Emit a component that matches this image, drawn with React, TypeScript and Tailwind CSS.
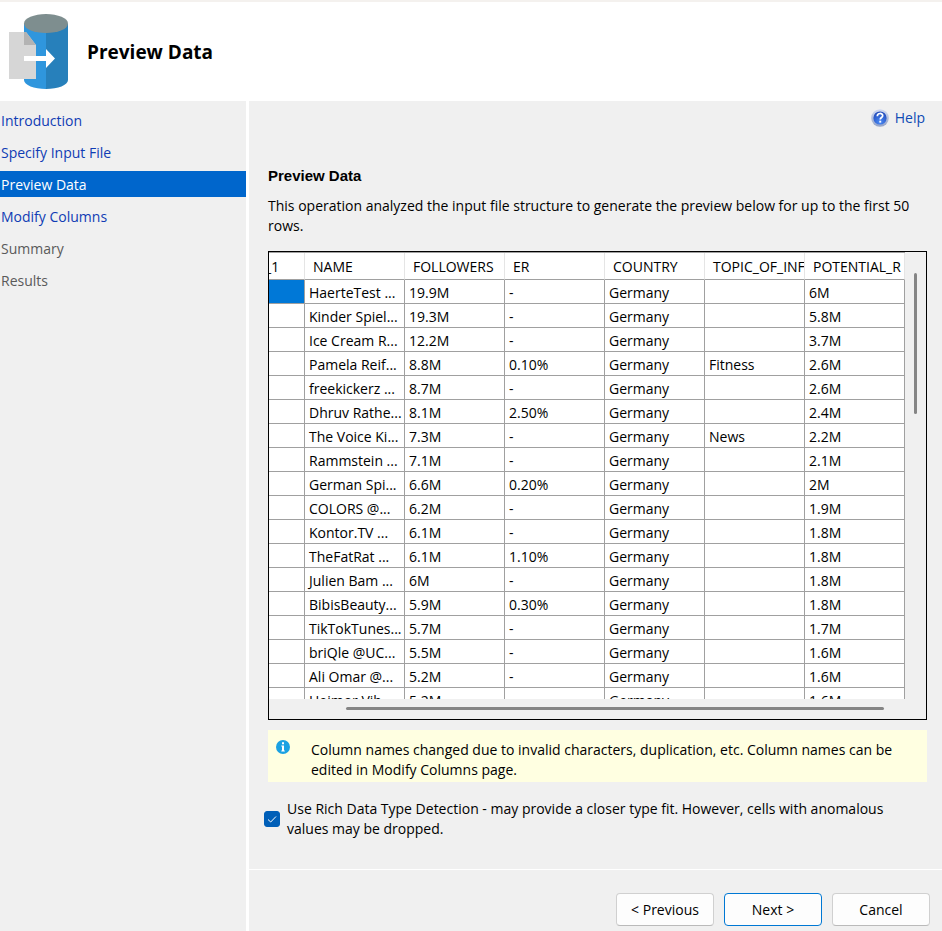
import { useState } from "react";

type Step = { label: string; state: "link" | "current" | "pending" };

const steps: Step[] = [
  { label: "Introduction", state: "link" },
  { label: "Specify Input File", state: "link" },
  { label: "Preview Data", state: "current" },
  { label: "Modify Columns", state: "link" },
  { label: "Summary", state: "pending" },
  { label: "Results", state: "pending" },
];

const columns = ["_1", "NAME", "FOLLOWERS", "ER", "COUNTRY", "TOPIC_OF_INF", "POTENTIAL_R"];

const rows = [
  ["", "HaerteTest ...", "19.9M", "-", "Germany", "", "6M"],
  ["", "Kinder Spiel...", "19.3M", "-", "Germany", "", "5.8M"],
  ["", "Ice Cream R...", "12.2M", "-", "Germany", "", "3.7M"],
  ["", "Pamela Reif...", "8.8M", "0.10%", "Germany", "Fitness", "2.6M"],
  ["", "freekickerz ...", "8.7M", "-", "Germany", "", "2.6M"],
  ["", "Dhruv Rathe...", "8.1M", "2.50%", "Germany", "", "2.4M"],
  ["", "The Voice Ki...", "7.3M", "-", "Germany", "News", "2.2M"],
  ["", "Rammstein ...", "7.1M", "-", "Germany", "", "2.1M"],
  ["", "German Spi...", "6.6M", "0.20%", "Germany", "", "2M"],
  ["", "COLORS @...", "6.2M", "-", "Germany", "", "1.9M"],
  ["", "Kontor.TV ...", "6.1M", "-", "Germany", "", "1.8M"],
  ["", "TheFatRat ...", "6.1M", "1.10%", "Germany", "", "1.8M"],
  ["", "Julien Bam ...", "6M", "-", "Germany", "", "1.8M"],
  ["", "BibisBeauty...", "5.9M", "0.30%", "Germany", "", "1.8M"],
  ["", "TikTokTunes...", "5.7M", "-", "Germany", "", "1.7M"],
  ["", "briQle @UC...", "5.5M", "-", "Germany", "", "1.6M"],
  ["", "Ali Omar @...", "5.2M", "-", "Germany", "", "1.6M"],
  ["", "Heimor Vib...", "5.2M", "-", "Germany", "", "1.6M"],
];

function DatabaseLogo() {
  return (
    <svg width="59" height="76" viewBox="0 0 59 76" aria-hidden="true">
      <path d="M15 10v56c0 5 10 9 22 9V10z" fill="#2f96dd" />
      <path d="M37 10v65c12 0 22-4 22-9V10z" fill="#2780bb" />
      <ellipse cx="37" cy="9.500" rx="22" ry="9.500" fill="#7e8e8f" />
      <path d="M0 18h17l10 13v34H0z" fill="#d6d6d6" />
      <path d="M15 18h2l10 13H15z" fill="#b3b3b3" />
      <path d="M15 42h22v-7l9 9.500-9 9.500v-7H15z" fill="#fff" />
    </svg>
  );
}

function HelpIcon() {
  return (
    <svg width="18" height="18" viewBox="0 0 18 18" aria-hidden="true">
      <defs>
        <radialGradient id="helpFill" cx="0.5" cy="0.8" r="0.8">
          <stop offset="0" stopColor="#4a8af5" />
          <stop offset="1" stopColor="#2048b8" />
        </radialGradient>
        <linearGradient id="helpRim" x1="0" y1="0" x2="0" y2="1">
          <stop offset="0" stopColor="#d0daf2" />
          <stop offset="1" stopColor="#93a3c8" />
        </linearGradient>
      </defs>
      <circle cx="9" cy="9" r="8.800" fill="url(#helpRim)" />
      <circle cx="9" cy="9" r="6.600" fill="url(#helpFill)" />
      <path d="M6.300 7.200c0-3.600 5.400-3.500 5.400-.5 0 1.800-2.500 1.900-2.500 3.900" fill="none" stroke="#fff" strokeWidth="1.700" />
      <rect x="8.300" y="11.700" width="1.900" height="1.900" fill="#fff" />
    </svg>
  );
}

function InfoIcon() {
  return (
    <svg className="shrink-0" width="14" height="14" viewBox="0 0 14 14" aria-hidden="true">
      <circle cx="7" cy="7" r="7" fill="#1ba1e2" />
      <path d="M6 2.200h2v2H6zM5.300 5.500H8v5h.8v1H5.300v-1H6v-4h-.7z" fill="#fff" />
    </svg>
  );
}

function StepItem({ step }: { step: Step }) {
  if (step.state === "pending") {
    return <li className="px-px pt-1 pb-0.5 text-[#5a5a5a]">{step.label}</li>;
  }
  if (step.state === "current") {
    return (
      <li aria-current="step" className="bg-[#0066cc] px-px pt-1 pb-0.5 text-white">
        {step.label}
      </li>
    );
  }
  return (
    <li className="px-px pt-1 pb-0.5">
      <a href="#step" className="text-[#0f3cb4]">
        {step.label}
      </a>
    </li>
  );
}

function PreviewTable() {
  return (
    <div className="border border-black">
      <div className="flex">
        <div className="h-[447px] min-w-0 flex-1 overflow-hidden border-t border-[#a0a0a0] bg-white">
          <table className="w-full table-fixed border-separate border-spacing-0">
            <thead>
              <tr>
                {columns.map((name, i) => (
                  <th
                    key={name}
                    scope="col"
                    className={
                      "h-[27px] overflow-hidden border-r border-b border-r-[#e5e5e5] border-b-[#a0a0a0] pt-0.5 pr-0 pb-0 text-left font-normal whitespace-nowrap " +
                      (i === 0 ? "w-9 pl-0" : "pl-2")
                    }
                  >
                    {i === 0 ? <span className="-ml-1">{name}</span> : name}
                  </th>
                ))}
              </tr>
            </thead>
            <tbody>
              {rows.map((row, r) => (
                <tr key={r}>
                  {row.map((cell, c) => (
                    <td
                      key={c}
                      className={
                        "h-6 overflow-hidden border-r border-b border-[#a0a0a0] pt-0.5 pr-0 pb-0 pl-1 leading-5 whitespace-nowrap " +
                        (r === 0 && c === 0 ? "bg-[#0078d7]" : "")
                      }
                    >
                      {cell}
                    </td>
                  ))}
                </tr>
              ))}
            </tbody>
          </table>
        </div>
        <div className="w-[21px] pt-[21px] pl-[9px]">
          <div className="h-[141px] w-[3px] rounded-full bg-[#858585]" />
        </div>
      </div>
      <div className="h-5 pt-2 pr-[42px] pl-[77px]">
        <div className="h-[3px] rounded-full bg-[#858585]" />
      </div>
    </div>
  );
}

export default function App() {
  const [rich, setRich] = useState(true);
  const button = "h-[33px] w-[98px] rounded border bg-[#fdfdfd] text-black ";

  return (
    <div className="flex min-h-screen flex-col bg-white font-['Open_Sans','Noto_Sans',sans-serif] text-[14px] leading-5 text-black">
      <header className="flex h-[101px] items-center gap-[19px] border-t-2 border-[#f4f1ee] pl-[9px]">
        <DatabaseLogo />
        <h1 className="text-[19px] leading-6 font-bold">Preview Data</h1>
      </header>

      <div className="flex flex-1 gap-[3px]">
        <nav aria-label="Wizard steps" className="w-[246px] shrink-0 bg-[#f0f0f0] pt-1.5">
          <ol className="flex flex-col gap-1.5">
            {steps.map((step) => (
              <StepItem key={step.label} step={step} />
            ))}
          </ol>
        </nav>

        <main className="flex min-w-0 flex-1 flex-col bg-[#f0f0f0]">
          <div className="flex-1 pt-[7px] pr-[15px] pl-[19px]">
            <a href="#help" className="ml-auto flex w-fit items-center gap-1.5 pr-0.5 text-[#0f4bb4]">
              <HelpIcon />
              Help
            </a>

            <h2 className="mt-[38px] font-['Liberation_Sans',sans-serif] text-[15px] font-bold">Preview Data</h2>
            <p className="mt-2.5 mb-[15px]">
              This operation analyzed the input file structure to generate the preview below for up to the first 50
              rows.
            </p>

            <PreviewTable />

            <div className="mt-2.5 flex gap-[21px] bg-[#ffffe1] pt-[10px] pr-4 pb-0.5 pl-2">
              <InfoIcon />
              <p>
                Column names changed due to invalid characters, duplication, etc. Column names can be edited in Modify
                Columns page.
              </p>
            </div>

            <div className="mt-[17px] -ml-1 flex items-center gap-[7px]">
              <span className="grid size-4 shrink-0">
                <input
                  id="rich-detection"
                  type="checkbox"
                  checked={rich}
                  onChange={(e) => setRich(e.target.checked)}
                  className="peer col-start-1 row-start-1 size-4 appearance-none rounded-[3px] border border-[#005fb8] bg-white checked:bg-[#005fb8]"
                />
                <svg
                  className="pointer-events-none invisible col-start-1 row-start-1 peer-checked:visible"
                  width="16"
                  height="16"
                  viewBox="0 0 16 16"
                  fill="none"
                  stroke="#fff"
                  aria-hidden="true"
                >
                  <path d="M4 8.500l2.700 2.500L12 5.500" />
                </svg>
              </span>
              <label htmlFor="rich-detection" className="pr-4">
                Use Rich Data Type Detection - may provide a closer type fit. However, cells with anomalous values may
                be dropped.
              </label>
            </div>
          </div>

          <footer className="flex justify-end gap-2.5 border-t border-white pt-[23px] pr-3 pb-[5px]">
            <button type="button" className={button + "border-[#d0d0d0] border-b-[#bababa]"}>
              &lt; Previous
            </button>
            <button type="button" className={button + "border-[#0078d4]"}>
              Next &gt;
            </button>
            <button type="button" className={button + "border-[#d0d0d0] border-b-[#bababa]"}>
              Cancel
            </button>
          </footer>
        </main>
      </div>
    </div>
  );
}
